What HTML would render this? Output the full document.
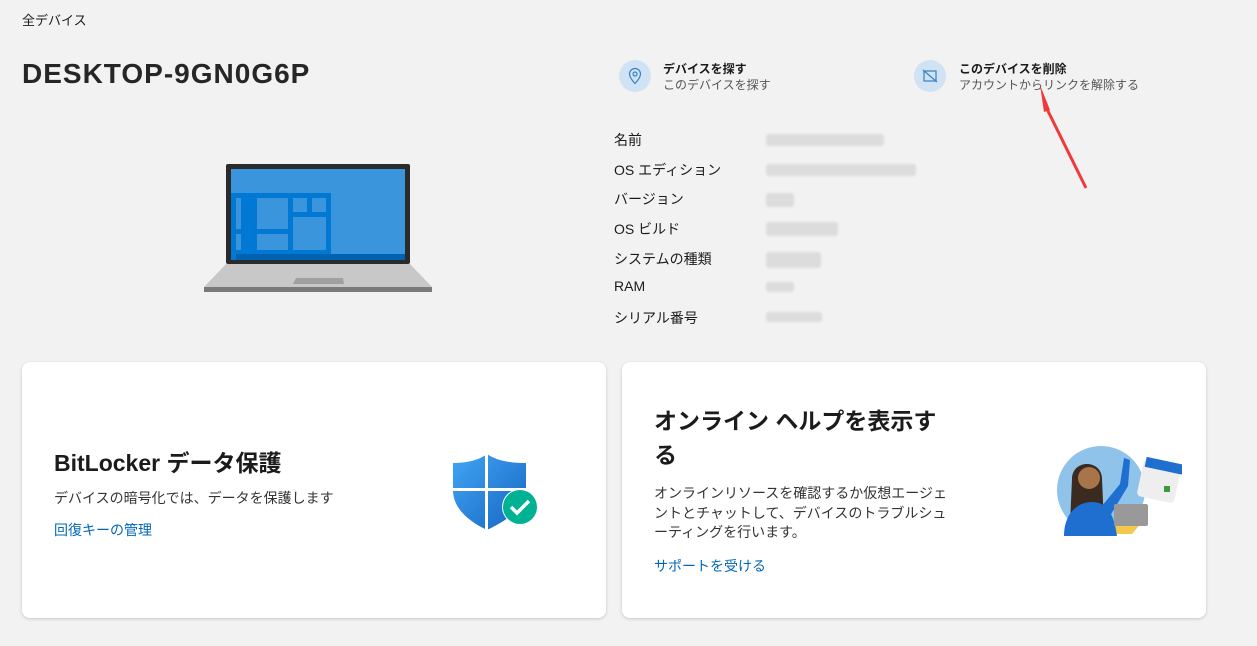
<!DOCTYPE html>
<html><head><meta charset="utf-8"><style>
*{margin:0;padding:0;box-sizing:border-box}
body{width:1257px;height:646px;background:#f2f2f2;font-family:"Liberation Sans","Noto Sans CJK JP",sans-serif;color:#1b1b1b;position:relative;overflow:hidden}
.a{position:absolute;white-space:nowrap}
.card{position:absolute;background:#fff;border-radius:8px;box-shadow:0 1px 3px rgba(0,0,0,.18)}
.lbl{font-size:14px;color:#1b1b1b}
.blur{position:absolute;background:#dcdcdc;border-radius:3px;filter:blur(1px)}
.ic{position:absolute;width:32px;height:32px;border-radius:50%;background:#cfe3f5}
</style></head><body>
<div class="a" style="left:22px;top:10px;font-size:13px">全デバイス</div>
<div class="a" style="left:22px;top:58px;font-size:28px;font-weight:600;color:#262626;letter-spacing:1px">DESKTOP-9GN0G6P</div>

<div class="ic" style="left:619px;top:60px"><svg width="32" height="32" viewBox="0 0 32 32"><path d="M16 8.5a5.5 5.5 0 0 0-5.5 5.5c0 4 5.5 9.5 5.5 9.5s5.5-5.5 5.5-9.5A5.5 5.5 0 0 0 16 8.5z" fill="none" stroke="#3a7fc4" stroke-width="1.2"/><circle cx="16" cy="14" r="2" fill="none" stroke="#3a7fc4" stroke-width="1.2"/></svg></div>
<div class="a" style="left:663px;top:60px;font-size:12px;font-weight:700">デバイスを探す</div>
<div class="a" style="left:663px;top:76px;font-size:12px;color:#555">このデバイスを探す</div>

<div class="ic" style="left:914px;top:60px"><svg width="32" height="32" viewBox="0 0 32 32"><rect x="10" y="11" width="12" height="10" fill="none" stroke="#3a7fc4" stroke-width="1.2"/><path d="M9 10l14 12" stroke="#3a7fc4" stroke-width="1.2"/></svg></div>
<div class="a" style="left:959px;top:60px;font-size:12px;font-weight:700">このデバイスを削除</div>
<div class="a" style="left:959px;top:76px;font-size:12px;color:#555">アカウントからリンクを解除する</div>
<svg class="a" style="left:1030px;top:80px" width="60" height="110"><path d="M10 5 L20 30 L14 32 Z" fill="#f03a3a"/><path d="M15 25 L56 108" stroke="#f03a3a" stroke-width="3"/></svg>

<div class="a lbl" style="left:614px;top:130px">名前</div>
<div class="a lbl" style="left:614px;top:160px">OS エディション</div>
<div class="a lbl" style="left:614px;top:189px">バージョン</div>
<div class="a lbl" style="left:614px;top:219px">OS ビルド</div>
<div class="a lbl" style="left:614px;top:249px">システムの種類</div>
<div class="a lbl" style="left:614px;top:278px">RAM</div>
<div class="a lbl" style="left:614px;top:308px">シリアル番号</div>
<div class="blur" style="left:766px;top:134px;width:118px;height:12px"></div>
<div class="blur" style="left:766px;top:164px;width:150px;height:12px"></div>
<div class="blur" style="left:766px;top:193px;width:28px;height:14px"></div>
<div class="blur" style="left:766px;top:222px;width:72px;height:14px"></div>
<div class="blur" style="left:766px;top:252px;width:55px;height:16px"></div>
<div class="blur" style="left:766px;top:282px;width:28px;height:10px"></div>
<div class="blur" style="left:766px;top:312px;width:56px;height:10px"></div>

<svg class="a" style="left:0;top:0" width="500" height="320">
<rect x="226" y="164" width="184" height="100" rx="2" fill="#2b2b2b"/>
<rect x="231" y="169" width="174" height="91" fill="#3b95dc"/>
<rect x="231" y="193" width="100" height="67" fill="#0078d4"/>
<rect x="236" y="254" width="169" height="6" fill="#0063b1"/>
<rect x="236" y="198" width="5" height="31" fill="#3b95dc"/>
<rect x="236" y="234" width="5" height="16" fill="#3b95dc"/>
<rect x="257" y="198" width="31" height="31" fill="#3b95dc"/>
<rect x="257" y="234" width="31" height="16" fill="#3b95dc"/>
<rect x="293" y="198" width="14" height="14" fill="#3b95dc"/>
<rect x="312" y="198" width="14" height="14" fill="#3b95dc"/>
<rect x="293" y="217" width="33" height="33" fill="#3b95dc"/>
<path d="M226 264 L410 264 L432 287 L204 287 Z" fill="#c8c8c8"/>
<rect x="204" y="287" width="228" height="5" fill="#7a7a7a"/>
<path d="M296 278 L343 278 L344 284 L293 284 Z" fill="#a0a0a0"/>
</svg>

<div class="card" style="left:22px;top:362px;width:584px;height:256px">
<div class="a" style="left:32px;top:82px;font-size:23px;font-weight:600">BitLocker データ保護</div>
<div class="a" style="left:32px;top:126px;font-size:14px;color:#333">デバイスの暗号化では、データを保護します</div>
<div class="a" style="left:32px;top:158px;font-size:14px;color:#0067b8">回復キーの管理</div>
<svg class="a" style="left:428px;top:88px" width="100" height="90">
<defs><linearGradient id="g" x1="0" y1="0" x2="1" y2="1"><stop offset="0" stop-color="#42a5f5"/><stop offset="1" stop-color="#1565c0"/></linearGradient></defs>
<path d="M37 4 C28 11 14 13 3 13 L3 40 C3 58 18 71 37 80 C56 71 76 58 76 40 L76 13 C61 13 47 11 37 4 Z" fill="url(#g)"/>
<rect x="35" y="2" width="3" height="80" fill="#fff"/>
<rect x="2" y="38" width="76" height="3" fill="#fff"/>
<circle cx="70" cy="57" r="18" fill="#fff"/>
<circle cx="70" cy="57" r="17" fill="#00b294"/>
<path d="M61 57 L67 63 L79 51" fill="none" stroke="#fff" stroke-width="3.5"/>
</svg>
</div>

<div class="card" style="left:622px;top:362px;width:584px;height:256px">
<div class="a" style="left:32px;top:42px;font-size:23px;font-weight:600;line-height:34px;white-space:normal;width:300px">オンライン ヘルプを表示する</div>
<div class="a" style="left:32px;top:122px;font-size:14px;color:#333;line-height:19.5px;white-space:normal;width:300px">オンラインリソースを確認するか仮想エージェントとチャットして、デバイスのトラブルシューティングを行います。</div>
<div class="a" style="left:32px;top:194px;font-size:14px;color:#0067b8">サポートを受ける</div>
<svg class="a" style="left:430px;top:82px" width="130" height="95">
<circle cx="49" cy="46" r="44" fill="#8fc3ea"/>
<path d="M20 78 L90 78 L80 90 L30 90 Z" fill="#f2c94c"/>
<path d="M20 35 C20 15 50 15 50 35 L52 80 L18 80 Z" fill="#3a2a20"/>
<circle cx="37" cy="34" r="11" fill="#a8754b"/>
<path d="M12 92 C12 70 25 58 40 58 C55 58 62 70 65 92 Z" fill="#1e6fd0"/>
<path d="M50 62 L68 40 L72 14 L78 16 L76 42 L58 72 Z" fill="#1e6fd0"/>
<rect x="62" y="60" width="34" height="22" rx="2" fill="#999"/>
<rect x="88" y="18" width="38" height="38" rx="4" fill="#eee" transform="rotate(12 107 37)"/>
<rect x="90" y="16" width="38" height="10" fill="#1e6fd0" transform="rotate(12 107 37)"/>
<rect x="112" y="42" width="6" height="6" fill="#3c9a3c"/>
</svg>
</div>
</body></html>
